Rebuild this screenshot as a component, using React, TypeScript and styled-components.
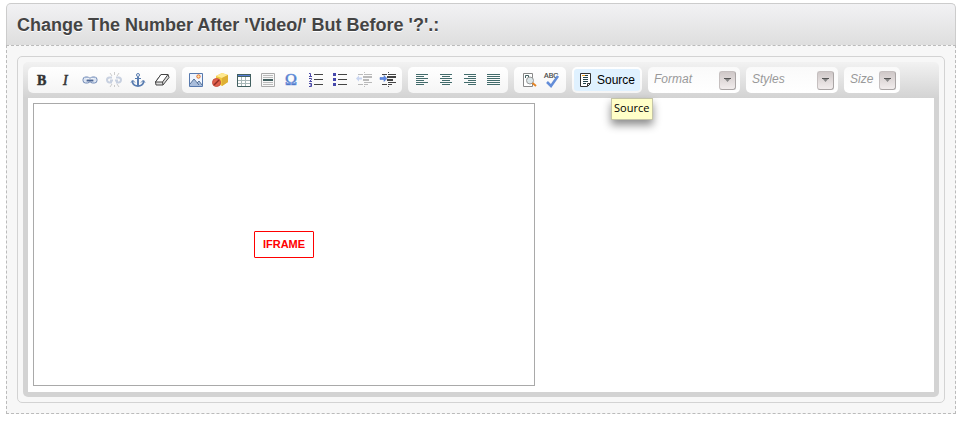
import React from "react";
import styled, { createGlobalStyle } from "styled-components";

const GlobalStyle = createGlobalStyle`
  *, *::before, *::after { box-sizing: border-box; }
  body { margin: 0; background: #fff; font-family: "Liberation Sans", Arial, sans-serif; }
`;

const Page = styled.main`
  padding: 3px 6px 8px;
`;

const Header = styled.header`
  height: 42px;
  padding: 0 10px;
  display: flex;
  align-items: center;
  border: 1px solid #ccc;
  border-bottom: 0;
  border-radius: 5px 5px 0 0;
  background: linear-gradient(#f2f2f4, #dedede);
`;

const Title = styled.h1`
  margin: 0;
  font-size: 18px;
  line-height: 24px;
  font-weight: bold;
  color: #444;
  text-shadow: 0 1px 0 #fff;
  white-space: nowrap;
`;

const Panel = styled.section`
  padding: 10px;
  border: 1px dashed #bbb;
  background: #f7f7f7;
`;

const EditorFrame = styled.div`
  padding: 5px;
  border: 1px solid #d3d3d3;
  border-radius: 5px;
`;

const Editor = styled.div`
  padding: 5px;
  border-radius: 5px;
  background: linear-gradient(#f2f2f2, #d3d3d3 36px);
`;

const Toolbar = styled.div`
  display: flex;
  flex-wrap: wrap;
  gap: 6px;
  padding-bottom: 5px;
`;

const Group = styled.div`
  display: flex;
  position: relative;
  height: 26px;
  padding: 2px;
  border-radius: 5px;
  background: linear-gradient(#fff, #f5f5f5);
`;

const ToolButton = styled.button<{ $faded?: boolean }>`
  width: 24px;
  height: 22px;
  padding: 3px 4px;
  border: 0;
  border-radius: 3px;
  background: none;
  opacity: ${(p) => (p.$faded ? 0.35 : 1)};
`;

const SourceButton = styled.button`
  display: flex;
  align-items: center;
  gap: 3px;
  height: 22px;
  padding: 0 5px 0 4px;
  border: 0;
  border-radius: 3px;
  background: #dff1ff;
  color: #000;
  font: 12px/16px "Liberation Sans", Arial, sans-serif;
`;

const Icon = styled.svg`
  display: block;
  width: 16px;
  height: 16px;
  flex: none;
  overflow: visible;
`;

const Tooltip = styled.div`
  position: absolute;
  z-index: 1;
  top: 31px;
  left: 39px;
  padding: 1px 3px 3px 2px;
  border: 1px solid #c5c5a8;
  background: #ffffc8;
  box-shadow: 0 5px 9px rgba(0, 0, 0, 0.45);
  font: 11px/16px "Open Sans", sans-serif;
  color: #000;
`;

const Combo = styled.label<{ $wide?: boolean }>`
  display: grid;
  align-items: center;
  width: ${(p) => (p.$wide ? "92px" : "56px")};
  height: 26px;
  border-radius: 5px;
  background: linear-gradient(#fafafa, #fff);
`;

const ComboSelect = styled.select`
  grid-area: 1 / 1;
  width: 100%;
  height: 24px;
  padding: 0 22px 2px 6px;
  appearance: none;
  border: 0;
  background: none;
  color: #999;
  font: italic 12px/16px "Liberation Sans", Arial, sans-serif;
`;

const ComboArrow = styled.span`
  grid-area: 1 / 1;
  justify-self: end;
  display: grid;
  place-items: center;
  width: 17px;
  height: 19px;
  margin-right: 4px;
  border: 1px solid #c6c0c0;
  border-right-color: #aaa5a5;
  border-bottom-color: #aaa5a5;
  border-radius: 3px;
  background: linear-gradient(#cfc8c8, #f2eded);
  pointer-events: none;
`;

const Document = styled.div`
  height: 294px;
  padding: 5px;
  background: #fff;
`;

const Embed = styled.div`
  display: grid;
  place-items: center;
  max-width: 502px;
  height: 283px;
  border: 1px solid #a9a9a9;
`;

const EmbedLabel = styled.span`
  padding: 5px 8px 6px;
  border: 1px solid #f00;
  border-radius: 1px;
  color: #f00;
  font: bold 11px/14px "Liberation Sans", Arial, sans-serif;
`;

const glyph = { fontFamily: '"Liberation Serif", serif' };

const lines = (spans: number[][], color = "#426b6b") =>
  spans.map(([x, y, w]) => <path key={`${x}-${y}`} d={`M${x} ${y}.5h${w}`} stroke={color} />);

const chain = (
  <g fill="none">
    <rect x="1" y="5" width="7" height="6" rx="2.5" fill="#dce5f3" stroke="#7089b4" />
    <rect x="8" y="5" width="7" height="6" rx="2.5" fill="#dce5f3" stroke="#7089b4" />
    <path d="M2 5.500h5M9 5.500h5" stroke="#9fb2d2" />
    <path d="M4 8h8" stroke="#fff" strokeWidth="3" />
    <path d="M4.500 8.500h7" stroke="#4c6796" strokeWidth="2" />
  </g>
);

const indentArt = (
  <>
    <path d="M8.500 0v1M8.500 14v1" stroke="#555" />
    {lines([[2, 2, 5], [8, 2, 8], [8, 10, 8], [2, 12, 5], [8, 12, 4]], "#444")}
    <path d="M7 5h9M7 8h6" stroke="#444" strokeWidth="2" />
  </>
);

const icons: Record<string, React.ReactNode> = {
  Bold: <text x="3" y="13" fontSize="14" fontWeight="bold" fill="#333" stroke="#333" strokeWidth=".5" style={glyph}>B</text>,
  Italic: <text x="5" y="13" fontSize="14" fill="#333" stroke="#333" strokeWidth=".5" fontStyle="italic" style={glyph}>I</text>,
  Link: chain,
  Unlink: (
    <>
      <g fill="none" stroke="#6d86b2" strokeWidth="2">
        <path d="M6 5.500H3.500a2.500 2.500 0 0 0 0 5H6M4 8.500h3M10 5.500h2.500a2.500 2.500 0 0 1 0 5H10M9 8.500h3" />
      </g>
      <path d="M8.500 0v3M4 1l2 3M13 1l-2 3M6 12l-2 3M8.500 13v2M11 12l2 3" stroke="#777" fill="none" />
    </>
  ),
  Anchor: (
    <g fill="none" stroke="#587cb0">
      <circle cx="8" cy="3" r="1.500" />
      <path d="M8 5v9" strokeWidth="2" />
      <path d="M5 6.500h6" />
      <path d="M2.500 8.500v2c1 3 3.500 3.500 5.500 3.500s4.500-.500 5.500-3.500v-2" strokeWidth="1.800" />
      <path d="M1 10.500l2-2 2 2M11 10.500l2-2 2 2" />
    </g>
  ),
  "Remove Format": (
    <g stroke="#444" strokeLinejoin="round">
      <path d="M7 2.500h7l1 3-6 7.500H2l-.5-3z" fill="#ddd" />
      <path d="M7 2.500h7L8.500 10H1.500z" fill="#fff" />
      <path d="M8.500 10l.5 3" />
    </g>
  ),
  Image: (
    <>
      <path d="M1.500 1.500h13v13h-13z" fill="#eff5ff" stroke="#5779ad" />
      <circle cx="10.500" cy="4.500" r="1.700" fill="#ffe6a0" stroke="#e06a32" />
      <path d="M2 12l4-5 3 4 2-2 3 4v1H2z" fill="#a9bddb" />
      <path d="M2 12l4-5 5 6M9 11l2-2 3 4" fill="none" stroke="#567297" />
    </>
  ),
  Flash: (
    <>
      <path d="M4 4l6-3 6 2v7l-6 4-6-3z" fill="#f0c640" />
      <path d="M4 4l6-3 6 2-6 3z" fill="#ffe98f" />
      <path d="M10 6l6-3v7l-6 4z" fill="#deb034" />
      <circle cx="4.500" cy="10.500" r="4" fill="#e0604c" stroke="#c65040" />
      <path d="M2 13l5-5" stroke="#8e2c22" strokeWidth="1.500" />
    </>
  ),
  Table: (
    <>
      <path d="M1.500 2.500h13v12h-13z" fill="#fff" stroke="#426060" />
      <path d="M1 2h14v3H1z" fill="#426060" />
      <path d="M2 3h12v1H2z" fill="#587ed8" />
      <path d="M2 8.500h12M2 11.500h12M5.500 5v9M9.500 5v9" stroke="#a8b8b8" />
    </>
  ),
  "Horizontal Line": (
    <>
      <path d="M1.500 1.500h13v13h-13z" fill="#f8f8f8" stroke="#aaa" />
      {lines([[3, 3, 10], [3, 5, 10], [3, 10, 10], [3, 12, 10]], "#bbb")}
      <path d="M3 8h10" stroke="#426060" strokeWidth="2" />
    </>
  ),
  "Special Character": <text x="1" y="13" fontSize="16" fill="#476ec0" stroke="#6d94dc" strokeWidth=".7" style={glyph}>Ω</text>,
  "Numbered List": (
    <>
      <path d="M1 1.500h1.500v3M1 4.500h3M1 6.500h2.500v1l-2 2H4M1 11.500h2.500v3H1M2 13h1.500" stroke="#4a48a5" fill="none" />
      {lines([[6, 2, 9], [6, 7, 9], [6, 12, 9]], "#444")}
    </>
  ),
  "Bulleted List": (
    <>
      <path d="M1 1h3v3H1zM1 6h3v3H1zM1 11h3v3H1z" fill="#4648ac" />
      {lines([[6, 2, 9], [6, 7, 9], [6, 12, 9]], "#444")}
    </>
  ),
  "Decrease Indent": <>{indentArt}<path d="M0 6.500l3-3v2h3v2H3v2z" fill="#6f92e0" /></>,
  "Increase Indent": <>{indentArt}<path d="M7 6.500l-3-3v2H0v2h4v2z" fill="#5d88e8" stroke="#3e68c0" strokeWidth=".5" /></>,
  "Align Left": lines([[2, 2, 12], [2, 4, 8], [2, 6, 12], [2, 8, 8], [2, 10, 12], [2, 12, 8]]),
  Center: lines([[2, 2, 12], [4, 4, 8], [2, 6, 12], [4, 8, 8], [2, 10, 12], [4, 12, 8]]),
  "Align Right": lines([[2, 2, 12], [6, 4, 8], [2, 6, 12], [6, 8, 8], [2, 10, 12], [6, 12, 8]]),
  Justify: lines([[1, 2, 13], [1, 4, 13], [1, 6, 13], [1, 8, 13], [1, 10, 13], [1, 12, 13]]),
  Find: (
    <>
      <path d="M3.500 1.500h9v13h-9z" fill="#fff" stroke="#888" />
      <path d="M5.500 6V3.500h3V6" fill="none" stroke="#426060" />
      <circle cx="10" cy="8.500" r="3.500" fill="#dce6e8" stroke="#999" />
      <path d="M12.500 11l3.500 3" stroke="#e48423" strokeWidth="2" />
    </>
  ),
  "Check Spelling": (
    <>
      <text x="0" y="6" fontSize="7" fill="#444" stroke="#444" strokeWidth=".2" fontFamily='"Liberation Sans", sans-serif'>ABC</text>
      <path d="M3 10l4 4 7-10" fill="none" stroke="#638dd8" strokeWidth="2.500" />
    </>
  ),
};

const groups = [
  ["Bold", "Italic", "Link", "Unlink", "Anchor", "Remove Format"],
  ["Image", "Flash", "Table", "Horizontal Line", "Special Character", "Numbered List", "Bulleted List", "Decrease Indent", "Increase Indent"],
  ["Align Left", "Center", "Align Right", "Justify"],
  ["Find", "Check Spelling"],
];

const faded = ["Unlink", "Decrease Indent"];

const combos = [
  { name: "Format", wide: true },
  { name: "Styles", wide: true },
  { name: "Size", wide: false },
];

export default function App() {
  return (
    <>
      <GlobalStyle />
      <Page>
        <Header>
          <Title>Change The Number After 'Video/' But Before '?'.:</Title>
        </Header>
        <Panel>
          <EditorFrame>
            <Editor>
              <Toolbar role="toolbar" aria-label="Editor">
                {groups.map((group) => (
                  <Group key={group[0]}>
                    {group.map((name) => (
                      <ToolButton key={name} type="button" aria-label={name} $faded={faded.includes(name)}>
                        <Icon viewBox="0 0 16 16" aria-hidden="true">{icons[name]}</Icon>
                      </ToolButton>
                    ))}
                  </Group>
                ))}
                <Group>
                  <SourceButton type="button" aria-describedby="source-tip">
                    <Icon viewBox="0 0 16 16" aria-hidden="true">
                      <path d="M2.500 1.500h10v10l-3 3h-7z" fill="#fff" stroke="#333" />
                      <path d="M9.500 14v-2.500H12" fill="none" stroke="#333" />
                      {lines([[5, 3, 5], [5, 5, 5], [5, 7, 5], [5, 9, 5], [5, 11, 3]], "#24444c")}
                      <path d="M4 3.500h3" stroke="#f5a623" />
                    </Icon>
                    Source
                  </SourceButton>
                  <Tooltip id="source-tip" role="tooltip">Source</Tooltip>
                </Group>
                {combos.map(({ name, wide }) => (
                  <Combo key={name} $wide={wide}>
                    <ComboSelect aria-label={name} defaultValue={name}>
                      <option>{name}</option>
                    </ComboSelect>
                    <ComboArrow>
                      <svg width="9" height="4" viewBox="0 0 9 4" aria-hidden="true">
                        <path d="M1 0h7L4.500 4z" fill="#888" />
                        <path d="M1 .5h7" stroke="#555" />
                      </svg>
                    </ComboArrow>
                  </Combo>
                ))}
              </Toolbar>
              <Document>
                <Embed>
                  <EmbedLabel>IFRAME</EmbedLabel>
                </Embed>
              </Document>
            </Editor>
          </EditorFrame>
        </Panel>
      </Page>
    </>
  );
}
